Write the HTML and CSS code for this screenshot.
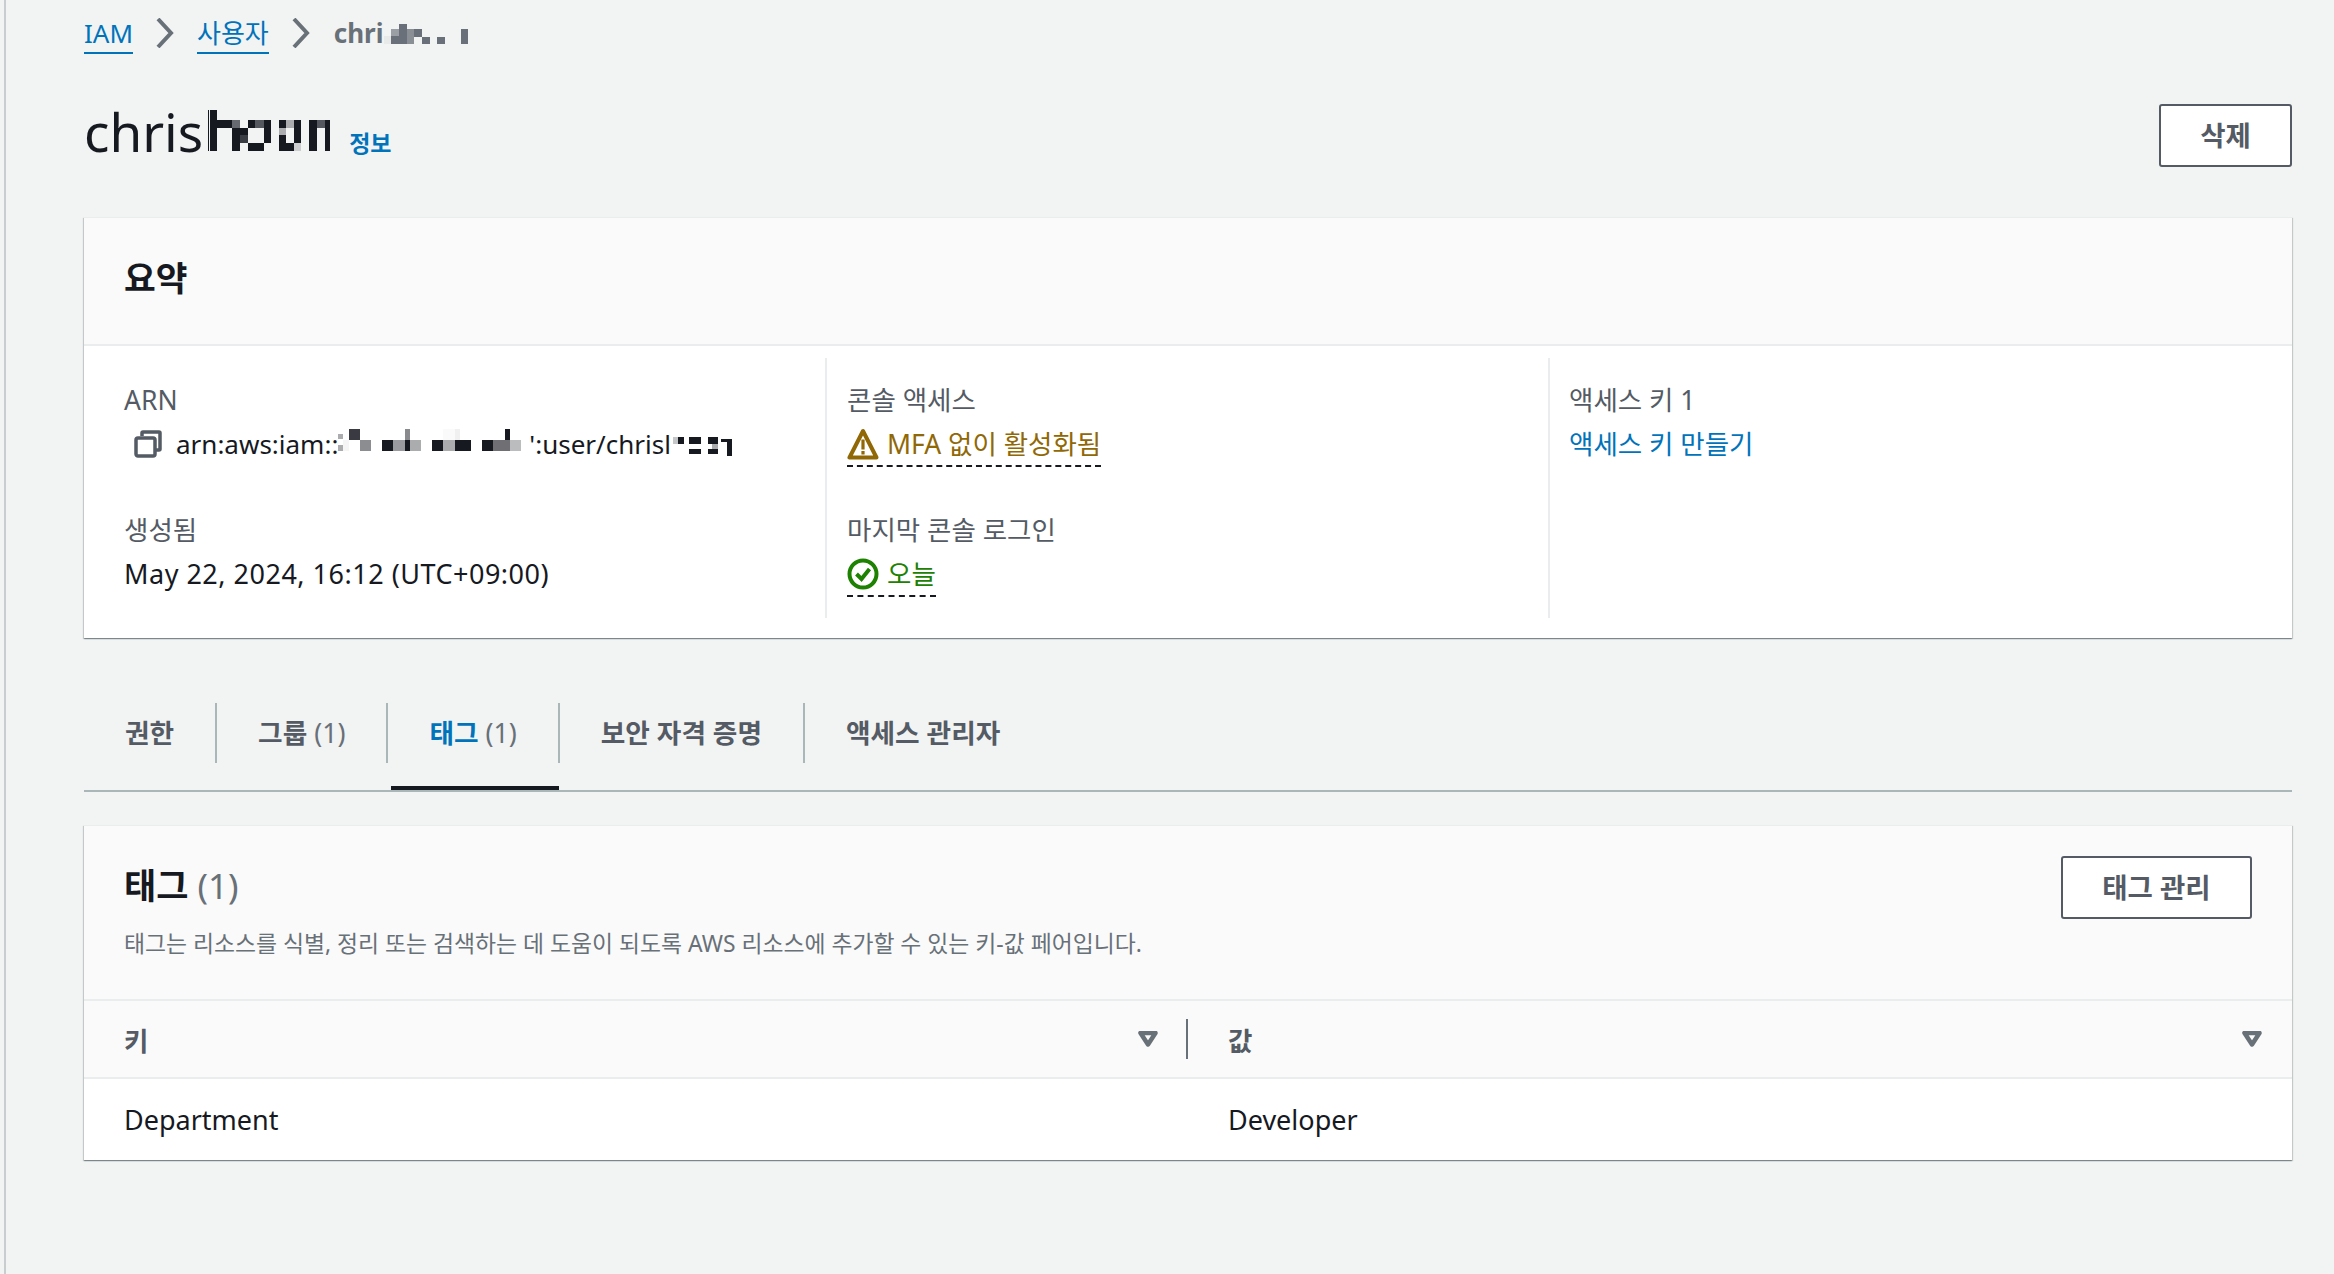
FILE: index.html
```html
<!DOCTYPE html>
<html lang="ko">
<head>
<meta charset="utf-8">
<title>chrishoon - IAM</title>
<link rel="stylesheet" href="styles.css">
</head>
<body>
<div class="page">
  <nav class="crumbs">
    <a class="crumb-link" href="#">IAM</a>
    <svg class="chev" viewBox="0 0 18 30"><path d="M2 1l13 14L2 29"/></svg>
    <a class="crumb-link" href="#">사용자</a>
    <svg class="chev" viewBox="0 0 18 30"><path d="M2 1l13 14L2 29"/></svg>
    <span class="crumb-current">chri<svg class="mosaic crumb-mosaic" width="85" height="21" viewBox="165 24 255 63" shape-rendering="crispEdges">
      <rect x="165" y="60" width="21" height="24" fill="#e8eaea"/><rect x="186" y="38" width="24" height="22" fill="#9a9fa5"/><rect x="186" y="60" width="24" height="24" fill="#6a7079"/><rect x="210" y="24" width="24" height="60" fill="#6a7079"/><rect x="234" y="38" width="22" height="46" fill="#8a8f96"/><rect x="256" y="38" width="22" height="24" fill="#6a7079"/><rect x="278" y="62" width="24" height="22" fill="#6a7079"/><rect x="324" y="62" width="24" height="22" fill="#6a7079"/><rect x="396" y="38" width="20" height="46" fill="#6a7079"/>
    </svg></span>
  </nav>

  <header class="title-row">
    <div class="title-group">
      <h1 class="title">chris<svg class="mosaic title-mosaic" width="129" height="42" viewBox="0 -15 387 126" shape-rendering="crispEdges">
        <g fill="#16191f">
          <rect x="3" y="-15" width="3" height="122"/>
          <rect x="8" y="-15" width="22" height="122"/><rect x="30" y="15" width="46" height="23"/>
          <rect x="76" y="38" width="23" height="69"/><rect x="99" y="38" width="23" height="23"/>
          <rect x="122" y="15" width="23" height="23"/><rect x="170" y="15" width="21" height="69"/><rect x="122" y="84" width="48" height="23"/>
          <rect x="215" y="15" width="23" height="92"/><rect x="260" y="15" width="23" height="69"/><rect x="238" y="84" width="22" height="23"/>
          <rect x="307" y="15" width="22" height="92"/><rect x="354" y="15" width="15" height="92"/>
        </g>
        <rect x="76" y="15" width="23" height="23" fill="#666a70"/>
        <rect x="99" y="61" width="23" height="23" fill="#3a3d44"/>
        <rect x="145" y="15" width="25" height="23" fill="#55585e"/>
        <rect x="238" y="15" width="22" height="23" fill="#aaacae"/>
        <rect x="215" y="38" width="23" height="23" fill="#aaacae"/>
        <rect x="260" y="84" width="23" height="23" fill="#ccced0"/>
        <rect x="329" y="15" width="25" height="23" fill="#55585e"/>
      </svg></h1>
      <a class="info-link" href="#">정보</a>
    </div>
    <button class="btn">삭제</button>
  </header>

  <section class="card">
    <div class="card-head summary-head"><h2 class="summary-title">요약</h2></div>
    <div class="summary-grid">
      <div class="col col-first">
        <div class="field">
          <div class="label">ARN</div>
          <div class="value arn">
            <svg class="copy-icon" viewBox="0 0 28 28"><path d="M8 6V3a1 1 0 0 1 1-1h16a1 1 0 0 1 1 1v16a1 1 0 0 1-1 1h-3"/><rect x="2" y="8" width="19" height="18" rx="2"/></svg>
            <span class="arn-text">arn:aws:iam::<svg class="mosaic arn-mosaic" width="187" height="24" viewBox="27 30 561 72" shape-rendering="crispEdges">
              <rect x="27" y="45" width="15" height="15" fill="#aaacae"/><rect x="27" y="78" width="15" height="17" fill="#aaacae"/><rect x="42" y="62" width="18" height="33" fill="#f5f5f5"/>
              <rect x="60" y="30" width="33" height="32" fill="#3a3b42"/><rect x="93" y="62" width="33" height="33" fill="#8b8d91"/>
              <rect x="159" y="62" width="33" height="33" fill="#16191f"/><rect x="192" y="62" width="36" height="33" fill="#999b9e"/><rect x="228" y="30" width="15" height="32" fill="#888a8e"/><rect x="228" y="62" width="15" height="33" fill="#16191f"/><rect x="243" y="62" width="33" height="33" fill="#aaacae"/>
              <rect x="309" y="62" width="33" height="33" fill="#16191f"/><rect x="342" y="62" width="36" height="33" fill="#aaacae"/><rect x="378" y="62" width="48" height="33" fill="#16191f"/><rect x="342" y="30" width="36" height="32" fill="#fafafa"/><rect x="378" y="30" width="15" height="32" fill="#f0f0f0"/>
              <rect x="459" y="62" width="33" height="33" fill="#16191f"/><rect x="492" y="62" width="51" height="33" fill="#707074"/><rect x="543" y="62" width="33" height="33" fill="#bbbcbe"/><rect x="528" y="30" width="15" height="32" fill="#16191f"/>
            </svg><span class="arn-tail">':user/chrisl</span><svg class="mosaic arn-mosaic2" width="62" height="19" viewBox="670 435 62 19" shape-rendering="crispEdges">
              <rect x="672" y="435" width="5" height="7" fill="#c4c6c8"/><rect x="677" y="435" width="6" height="7" fill="#16191f"/>
              <rect x="688" y="435" width="12" height="7" fill="#16191f"/><rect x="688" y="447" width="12" height="5" fill="#16191f"/>
              <rect x="707" y="435" width="10" height="7" fill="#16191f"/><rect x="711" y="442" width="6" height="5" fill="#aaacae"/><rect x="707" y="447" width="10" height="5" fill="#16191f"/>
              <rect x="720" y="437" width="6" height="3" fill="#16191f"/><rect x="726" y="437" width="5" height="17" fill="#16191f"/>
            </svg></span>
          </div>
        </div>
        <div class="field">
          <div class="label">생성됨</div>
          <div class="value date">May 22, 2024, 16:12 (UTC+09:00)</div>
        </div>
      </div>
      <div class="col">
        <div class="field">
          <div class="label">콘솔 액세스</div>
          <div class="value"><span class="status status-warn">
            <svg class="status-icon" viewBox="0 0 32 32"><path class="warn-tri" d="M16 3L2.5 29.5h27z"/><path class="warn-mark" d="M16 11.5v10M16 23v3.5"/></svg>MFA 없이 활성화됨</span></div>
        </div>
        <div class="field">
          <div class="label">마지막 콘솔 로그인</div>
          <div class="value"><span class="status status-ok">
            <svg class="status-icon" viewBox="0 0 32 32"><circle class="ok-ring" cx="16" cy="16" r="13.5"/><path class="ok-mark" d="M9.5 16l5 5 8-10"/></svg>오늘</span></div>
        </div>
      </div>
      <div class="col">
        <div class="field">
          <div class="label">액세스 키 1</div>
          <div class="value"><a class="plain-link" href="#">액세스 키 만들기</a></div>
        </div>
      </div>
    </div>
  </section>

  <div class="tabs">
    <div class="tab"><span class="tab-label">권한</span></div>
    <div class="tab"><span class="tab-label">그룹 <span class="count">(1)</span></span></div>
    <div class="tab tab-active"><span class="tab-label"><span class="tab-name">태그</span> <span class="count">(1)</span></span></div>
    <div class="tab"><span class="tab-label">보안 자격 증명</span></div>
    <div class="tab"><span class="tab-label tab-last">액세스 관리자</span></div>
  </div>

  <section class="card">
    <div class="card-head tags-head">
      <div>
        <h2 class="tags-title">태그 <span class="tags-count">(1)</span></h2>
        <p class="tags-desc">태그는 리소스를 식별, 정리 또는 검색하는 데 도움이 되도록 AWS 리소스에 추가할 수 있는 키-값 페어입니다.</p>
      </div>
      <button class="btn btn-tags">태그 관리</button>
    </div>
    <div class="table-head">
      <div class="th"><div class="th-inner th-divided"><span>키</span><svg class="sort" viewBox="0 0 20 16"><path d="M2.5 2h15L10 13.5z"/></svg></div></div>
      <div class="th"><div class="th-inner"><span>값</span><svg class="sort" viewBox="0 0 20 16"><path d="M2.5 2h15L10 13.5z"/></svg></div></div>
    </div>
    <div class="table-row">
      <div class="td">Department</div>
      <div class="td">Developer</div>
    </div>
  </section>
</div>
</body>
</html>
```

FILE: styles.css
```css
* { box-sizing: border-box; }
html, body { height: 100%; }
body {
  margin: 0;
  background: #f2f3f3;
  color: #16191f;
  font-family: "Noto Sans", "Noto Sans CJK KR", sans-serif;
  font-size: 26.5px;
  overflow: hidden;
}
a { color: #0073bb; }
h1, h2, p { margin: 0; }

.page {
  min-height: 100%;
  margin-left: 4px;
  border-left: 2px solid #c9cdcd;
  padding: 11px 42px 0 78px;
}

/* breadcrumb */
.crumbs {
  display: flex;
  align-items: center;
  height: 44px;
  gap: 23px;
}
.crumb-link {
  line-height: 38px;
  text-decoration: none;
  border-bottom: 2px solid #0073bb;
  font-size: 26px;
  margin-top: 1px;
}
.chev { width: 18px; height: 30px; fill: none; stroke: #687078; stroke-width: 4; }
.crumb-current { color: #687078; font-size: 26px; font-weight: 700; display: flex; align-items: center; margin-left: 1px; }
.mosaic { display: inline-block; }
.crumb-mosaic { align-self: center; margin-top: 3px; }

/* title */
.title-row {
  display: flex;
  justify-content: space-between;
  align-items: flex-start;
  margin-top: 49px;
  height: 113px;
}
.title-group { display: flex; align-items: baseline; gap: 13px; }
.title {
  font-size: 53px;
  font-weight: 400;
  line-height: 55px;
  display: flex;
  align-items: flex-start;
}
.title-mosaic { margin: 6px 0 -11px 4px; }
.info-link { font-size: 23px; font-weight: 700; text-decoration: none; }

.btn {
  width: 133px;
  height: 63px;
  background: #fff;
  border: 2.5px solid #545b64;
  border-radius: 3px;
  color: #545b64;
  font: 700 27.5px "Noto Sans", "Noto Sans CJK KR", sans-serif;
  padding: 0 0 4px;
}
.btn-tags { width: 191px; flex: none; }

/* card */
.card {
  background: #fff;
  border-top: 1px solid #eaeded;
  box-shadow: 0 1px 1px 0 rgba(0, 28, 36, .3), 1px 1px 1px 0 rgba(0, 28, 36, .15), -1px 1px 1px 0 rgba(0, 28, 36, .15);
}
.card-head { background: #fafafa; border-bottom: 2px solid #eaeded; }
.summary-head { height: 128px; padding: 0 40px 10px; display: flex; align-items: center; }
.summary-title { font-size: 34.5px; font-weight: 700; }

.summary-grid {
  display: grid;
  grid-template-columns: 741px 723px 1fr;
  padding: 12px 0 20px;
}
.col { border-left: 2px solid #eaeded; padding: 20px 20px 0; height: 260px; }
.col:last-child { padding-left: 19px; }
.col-first { border-left: 0; padding-left: 40px; }
.field { height: 130px; }
.label { color: #545b64; line-height: 44px; }
.value { line-height: 44px; white-space: nowrap; }
.date { font-size: 27px; letter-spacing: .5px; }
.arn { display: flex; align-items: center; padding-left: 10px; font-size: 26px; }
.copy-icon { width: 28px; height: 28px; flex: none; margin-right: 14px; fill: none; stroke: #545b64; stroke-width: 3.5; }
.arn-text { display: flex; align-items: center; }
.arn-mosaic { margin-top: -7px; }
.arn-mosaic2 { margin-top: 4px; }
.arn-tail { margin-left: 4px; }

.status {
  display: inline-flex;
  align-items: center;
  gap: 8px;
  height: 45px;
  border-bottom: 2px dashed #16191f;
}
.status-icon { width: 32px; height: 32px; flex: none; fill: none; }
.status-warn { color: #906806; }
.status-ok { color: #1d8102; }
.warn-tri { stroke: #906806; stroke-width: 4; stroke-linejoin: round; }
.warn-mark { stroke: #906806; stroke-width: 3.2; }
.ok-ring, .ok-mark { stroke: #1d8102; stroke-width: 4; }
.plain-link { text-decoration: none; }

/* tabs */
.tabs {
  display: flex;
  margin-top: 65px;
  padding-bottom: 27px;
  border-bottom: 2px solid #aab7b8;
  position: relative;
}
.tab { position: relative; }
.tab-label {
  display: block;
  padding: 0 41px;
  height: 60px;
  line-height: 60px;
  border-right: 2px solid #aab7b8;
  color: #545b64;
  font-size: 26.7px;
  font-weight: 700;
  white-space: nowrap;
}
.tab-last { border-right: 0; }
.count { font-weight: 400; color: #687078; }
.tab-name { color: #0073bb; }
.tab-active::after {
  content: "";
  position: absolute;
  left: 3px;
  right: 1px;
  bottom: -27px;
  height: 4px;
  background: #16191f;
}

/* tags */
.tabs + .card { margin-top: 33px; }
.tags-head {
  height: 175px;
  padding: 30px 40px 0 40px;
  display: flex;
  justify-content: space-between;
  align-items: flex-start;
}
.tags-title { font-size: 35px; font-weight: 700; line-height: 60px; }
.tags-count { font-weight: 400; color: #687078; }
.tags-desc { font-size: 22.85px; color: #687078; line-height: 36px; margin-top: 10px; }

.table-head {
  display: grid;
  grid-template-columns: 1fr 1fr;
  height: 78px;
  background: #fafafa;
  border-bottom: 2px solid #eaeded;
  align-items: center;
}
.th { padding-left: 40px; }
.th-inner {
  display: flex;
  justify-content: space-between;
  align-items: center;
  height: 40px;
  padding-right: 28px;
  border-right: 2px solid transparent;
  color: #545b64;
  font-weight: 700;
}
.th-divided { border-right-color: #687078; }
.sort { width: 20px; height: 16px; fill: none; stroke: #687078; stroke-width: 4.5; stroke-linejoin: round; }

.table-row { display: grid; grid-template-columns: 1fr 1fr; height: 81px; align-items: center; }
.td { padding-left: 40px; font-size: 27px; }
```
